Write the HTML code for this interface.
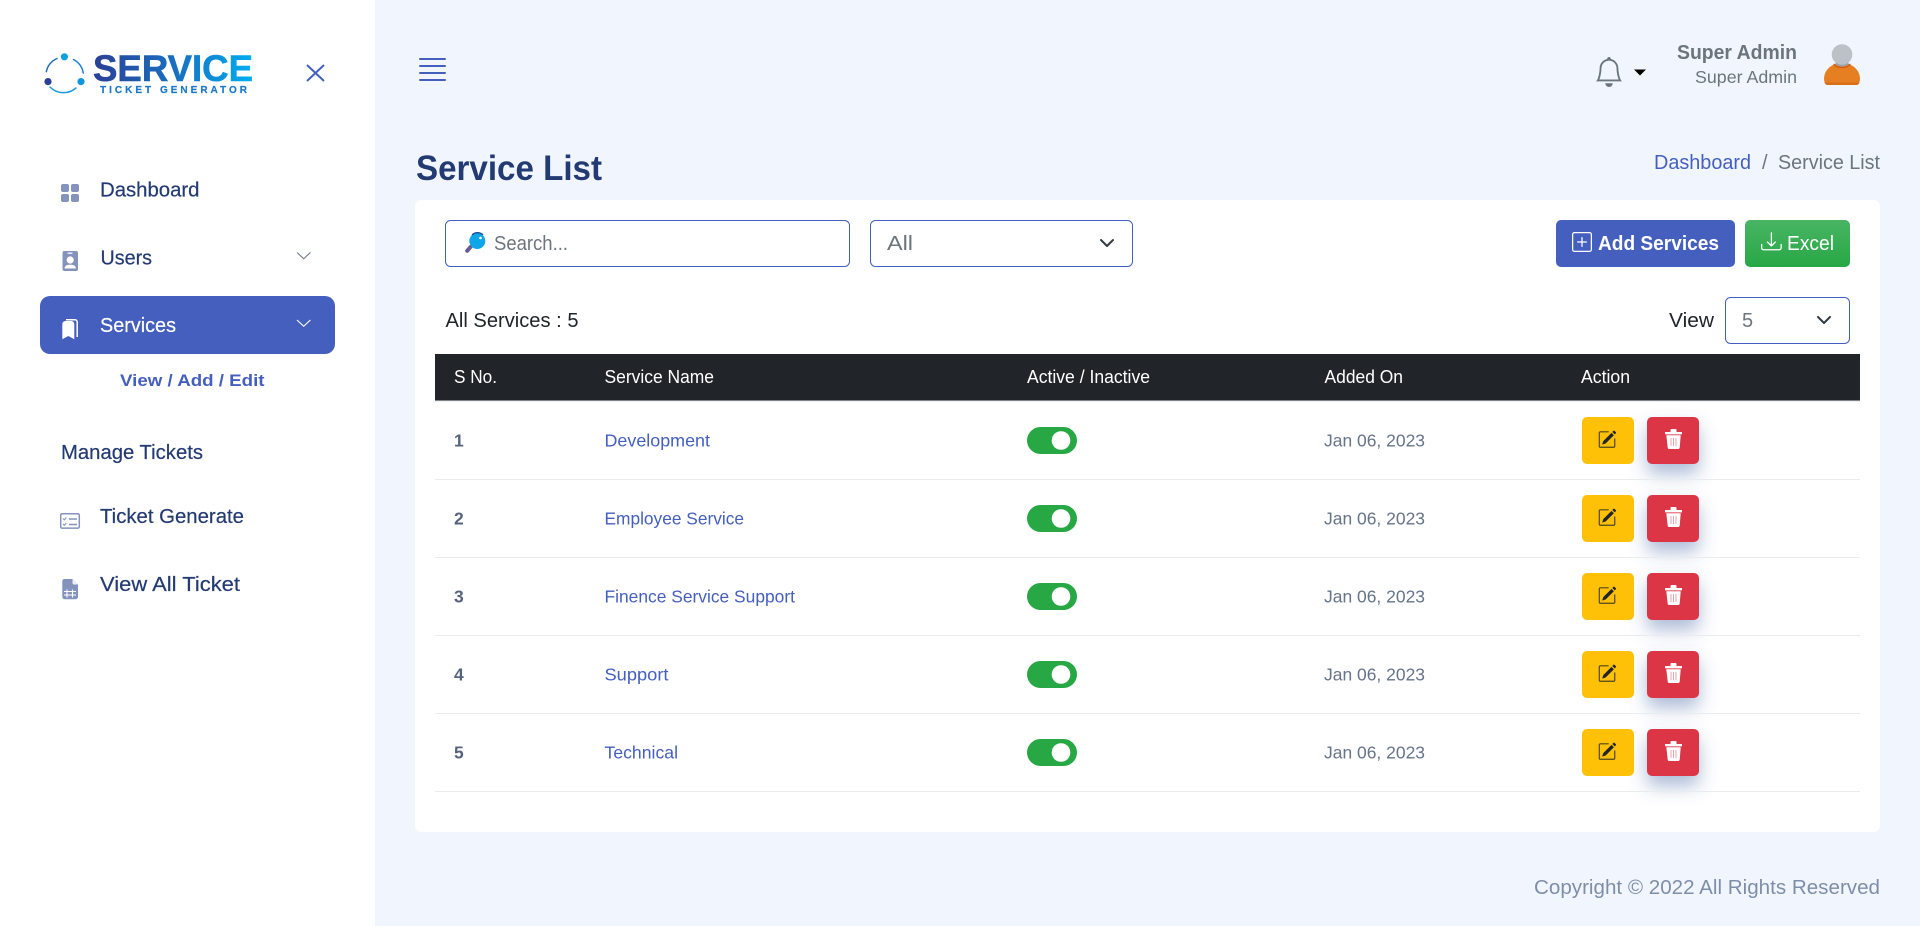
<!DOCTYPE html>
<html lang="en"><head><meta charset="utf-8"><title>Service List</title>
<style>
html,body{margin:0;padding:0;background:#f1f6fe;width:1920px;height:926px;overflow:hidden}
svg{display:block;position:absolute;left:0;top:0}
text{font-family:"Liberation Sans",sans-serif;font-size:20px}
.nav{fill:#233a72;stroke:#233a72;stroke-width:.2}
.g{fill:#6c757d}
.th{fill:#fff;font-size:18px}
.n{fill:#55637f;font-size:17.5px;font-weight:700}
.l{fill:#455fbf;font-size:17.5px}
.d{fill:#66748a;font-size:17.5px}
</style></head><body>
<svg width="1920" height="926" viewBox="0 0 1920 926" xmlns="http://www.w3.org/2000/svg">
<defs>
<linearGradient id="lg" gradientUnits="userSpaceOnUse" x1="93" y1="0" x2="253" y2="0"><stop offset="0" stop-color="#2b3f95"/><stop offset=".55" stop-color="#1673c4"/><stop offset="1" stop-color="#00aeef"/></linearGradient>
<linearGradient id="xl" x1="0" y1="0" x2="0" y2="1"><stop offset="0" stop-color="#48b564"/><stop offset="1" stop-color="#28a745"/></linearGradient>
<filter id="sh" x="-80%" y="-80%" width="260%" height="280%"><feDropShadow dx="0" dy="10" stdDeviation="9" flood-color="#3f5f9f" flood-opacity=".42"/></filter>
<g id="tg"><rect x="1027" y="0" width="50" height="27" rx="13.5" fill="#28a745"/><circle cx="1061" cy="13.5" r="9.3" fill="#fff"/></g>
<g id="act">
<rect x="1647" y="0" width="52" height="47" rx="5" fill="#dc3545" filter="url(#sh)"/>
<rect x="1582" y="0" width="52" height="47" rx="5" fill="#ffc107"/>
<g transform="translate(1597.5,13) scale(1.19)" fill="#212529"><path d="M15.502 1.94a.5.5 0 0 1 0 .706L14.459 3.69l-2-2L13.502.646a.5.5 0 0 1 .707 0l1.293 1.293zm-1.75 2.456-2-2L4.939 9.21a.5.5 0 0 0-.121.196l-.805 2.414a.25.25 0 0 0 .316.316l2.414-.805a.5.5 0 0 0 .196-.12l6.813-6.814z"/><path opacity=".8" d="M1 13.5A1.5 1.5 0 0 0 2.5 15h11a1.5 1.5 0 0 0 1.5-1.5v-6a.5.5 0 0 0-1 0v6a.5.5 0 0 1-.5.5h-11a.5.5 0 0 1-.5-.5v-11a.5.5 0 0 1 .5-.5H9a.5.5 0 0 0 0-1H2.5A1.5 1.5 0 0 0 1 2.5v11z"/></g>
<g fill="#fff"><path d="M1665 15h17v2.4h-17zM1670.5 13a1 1 0 0 1 1-1h4a1 1 0 0 1 1 1v2.500h-6z"/><path d="M1666.300 18.300h14.400l-1 12.300a1.600 1.600 0 0 1-1.600 1.400h-8.800a1.600 1.600 0 0 1-1.600-1.400z"/></g>
<path d="M1671 21v8M1673.500 21v8M1676 21v8" stroke="#dc3545" stroke-width=".7" opacity=".65"/>
</g>
</defs>

<rect width="1920" height="926" fill="#f1f6fe"/>
<rect width="375" height="926" fill="#fff"/>

<!-- logo -->
<g fill="none" stroke-width="1.500" stroke-linecap="round">
<path d="M46.300 71.700A19 19 0 0 1 57 58.500" stroke="#1c6bbd"/>
<path d="M73.500 59.500A19 19 0 0 1 83.300 73" stroke="#1a7fd0"/>
<path d="M50 87A19 19 0 0 0 76 88" stroke="#1b9be0"/>
</g>
<circle cx="64.400" cy="56.800" r="3.600" fill="#0f9fe3"/><circle cx="48" cy="81.600" r="3.600" fill="#2b3f95"/><circle cx="81" cy="81.600" r="3.600" fill="#1295dd"/>
<text x="93" y="81" font-weight="700" style="font-size:37.500px" fill="url(#lg)" stroke="url(#lg)" stroke-width=".6" textLength="160" lengthAdjust="spacingAndGlyphs">SERVICE</text>
<text x="100" y="93" font-weight="700" style="font-size:10px" fill="#1a78cc" stroke="#1a78cc" stroke-width=".2" textLength="147">TICKET GENERATOR</text>
<path d="M307 65l17 16M324 65l-17 16" stroke="#455fbf" stroke-width="2" fill="none"/>

<!-- nav -->
<g fill="#8493bd">
<rect x="61" y="184" width="8" height="8" rx="2"/><rect x="71" y="184" width="8" height="8" rx="2"/><rect x="61" y="194" width="8" height="8" rx="2"/><rect x="71" y="194" width="8" height="8" rx="2"/>
</g>
<text class="nav" x="100" y="196.500" textLength="99.500" lengthAdjust="spacingAndGlyphs">Dashboard</text>

<rect x="62.500" y="251" width="15.500" height="20" rx="2" fill="#8493bd"/>
<rect x="67.500" y="252.500" width="5" height="1.300" rx=".6" fill="#fff"/>
<circle cx="70.200" cy="260" r="3.600" fill="#fff"/><path d="M64.500 268.500c0-3 2.500-3.800 5.700-3.800s5.700.8 5.700 3.800z" fill="#fff"/>
<text class="nav" x="100.500" y="264.500" textLength="51.500" lengthAdjust="spacingAndGlyphs">Users</text>
<path d="M297 252.500l6.700 6.300 6.700-6.300" fill="none" stroke="#737b88" stroke-width="1.100"/>

<rect x="40" y="296" width="295" height="58" rx="10" fill="#455fbf"/>
<path d="M62.300 324a3 3 0 0 1 3-3h6a3 3 0 0 1 3 3v15.300l-6-3.300-6 3.300z" fill="#fff"/>
<path d="M66 319.800h9a2.200 2.200 0 0 1 2.200 2.200v15" fill="none" stroke="#fff" stroke-width="1.500"/>
<text x="100" y="332" fill="#fff" stroke="#fff" stroke-width=".2" textLength="76" lengthAdjust="spacingAndGlyphs">Services</text>
<path d="M297 320l6.700 6.300 6.700-6.300" fill="none" stroke="#fff" stroke-width="1.100"/>

<text x="120" y="386" fill="#455fbf" font-weight="700" style="font-size:16.500px" textLength="144.500" lengthAdjust="spacingAndGlyphs">View / Add / Edit</text>
<text class="nav" x="61" y="459" textLength="142" lengthAdjust="spacingAndGlyphs">Manage Tickets</text>

<rect x="60.700" y="513.700" width="18.600" height="14.400" rx="1.500" fill="none" stroke="#8493bd" stroke-width="1.500"/>
<path d="M69 519h8M69 524.500h8" stroke="#8493bd" stroke-width="1.500"/>
<path d="M63 518.500l1.300 1.300 2-2.300M63 524l1.300 1.300 2-2.300" stroke="#8493bd" stroke-width="1.100" fill="none"/>
<text class="nav" x="100" y="523" textLength="144" lengthAdjust="spacingAndGlyphs">Ticket Generate</text>

<path d="M64.500 579h8l5.500 5.500v12.500a2.200 2.200 0 0 1-2.200 2.200h-11.300a2.200 2.200 0 0 1-2.200-2.200v-15.800a2.200 2.200 0 0 1 2.200-2.200z" fill="#8493bd"/>
<path d="M72.500 579v4a1.500 1.500 0 0 0 1.500 1.500h4z" fill="#fff" opacity=".85"/>
<path d="M64 591.500h12M64 595h12M67 589.500v8M72.500 589.500v8" stroke="#fff" stroke-width="1.100" fill="none"/>
<text class="nav" x="100" y="591" textLength="140" lengthAdjust="spacingAndGlyphs">View All Ticket</text>

<!-- topbar -->
<g fill="#455fbf"><rect x="419" y="58" width="27" height="2" rx="1"/><rect x="419" y="65" width="27" height="2" rx="1"/><rect x="419" y="72" width="27" height="2" rx="1"/><rect x="419" y="79" width="27" height="2" rx="1"/></g>
<g transform="translate(1594,57) scale(1.875)" fill="#6c757d"><path d="M8 16a2 2 0 0 0 2-2H6a2 2 0 0 0 2 2zM8 1.918l-.797.161A4.002 4.002 0 0 0 4 6c0 .628-.134 2.197-.459 3.742-.16.767-.376 1.566-.663 2.258h10.244c-.287-.692-.502-1.490-.663-2.258C12.134 8.197 12 6.628 12 6a4.002 4.002 0 0 0-3.203-3.920L8 1.917zM14.220 12c.223.447.481.801.780 1H1c.299-.199.557-.553.780-1C2.680 10.200 3 6.880 3 6c0-2.420 1.720-4.440 4.005-4.901a1 1 0 1 1 1.990 0A5.002 5.002 0 0 1 13 6c0 .880.320 4.200 1.220 6z"/></g>
<path d="M1634 69.500h12l-6 6z" fill="#000"/>
<text x="1677" y="59" class="g" font-weight="700" textLength="120" lengthAdjust="spacingAndGlyphs">Super Admin</text>
<text x="1695" y="83" class="g" style="font-size:17.500px" textLength="102" lengthAdjust="spacingAndGlyphs">Super Admin</text>
<path d="M1824 79c0-8.500 7-16 18-16s18 7.500 18 16c0 3.500-2 6-4.500 6h-27c-2.500 0-4.500-2.500-4.500-6z" fill="#e67e22"/>
<path d="M1824.400 82.500c.6 1.500 2 2.500 3.100 2.500h29c1.100 0 2.500-1 3.100-2.500z" fill="#d96f15"/>
<path d="M1834.500 63.600c1.500 4.400 13.500 4.400 15 0l1.200.4c-1.700 5.500-15.700 5.500-17.400 0z" fill="#cf5a0a"/>
<path d="M1835.500 62h13v2.300c-2.500 3-10.500 3-13 0z" fill="#98a1aa"/>
<circle cx="1842" cy="54.500" r="10.300" fill="#bcc1c8"/>

<!-- heading -->
<text x="416" y="180" font-weight="700" style="font-size:35px" fill="#233a72" textLength="186" lengthAdjust="spacingAndGlyphs">Service List</text>
<text x="1654" y="169" fill="#455fbf" textLength="97" lengthAdjust="spacingAndGlyphs">Dashboard</text>
<text x="1762" y="169" class="g">/</text>
<text x="1778" y="169" class="g" textLength="102" lengthAdjust="spacingAndGlyphs">Service List</text>

<!-- card -->
<rect x="415" y="200" width="1465" height="632" rx="7" fill="#fff"/>
<rect x="445.500" y="220.500" width="404" height="46" rx="5" fill="#fff" stroke="#455fbf" stroke-width="1"/>
<path d="M470.500 247l-3.300 3.800" stroke="#6b5b95" stroke-width="4" stroke-linecap="round"/>
<circle cx="477.300" cy="241" r="8" fill="#0ea5e9"/><path d="M472 235a8 8 0 0 1 11-.2" fill="none" stroke="#1d4f8f" stroke-width="1.300"/><circle cx="480.500" cy="238" r="1.300" fill="#fff"/>
<text x="494" y="250" class="g" textLength="74" lengthAdjust="spacingAndGlyphs">Search...</text>
<rect x="870.500" y="220.500" width="262" height="46" rx="5" fill="#fff" stroke="#455fbf" stroke-width="1"/>
<text x="887" y="250" class="g" textLength="26" lengthAdjust="spacingAndGlyphs">All</text>
<path d="M1101 240l6 6 6-6" fill="none" stroke="#343a40" stroke-width="2" stroke-linecap="round" stroke-linejoin="round"/>

<rect x="1556" y="220" width="179" height="47" rx="5" fill="#455fbf"/>
<g transform="translate(1572,232) scale(1.250)" fill="#fff"><path d="M14 1a1 1 0 0 1 1 1v12a1 1 0 0 1-1 1H2a1 1 0 0 1-1-1V2a1 1 0 0 1 1-1h12zM2 0a2 2 0 0 0-2 2v12a2 2 0 0 0 2 2h12a2 2 0 0 0 2-2V2a2 2 0 0 0-2-2H2z"/><path d="M8 4a.5.5 0 0 1 .5.5v3h3a.5.5 0 0 1 0 1h-3v3a.5.5 0 0 1-1 0v-3h-3a.5.5 0 0 1 0-1h3v-3A.5.5 0 0 1 8 4z"/></g>
<text x="1598" y="250" fill="#fff" font-weight="700" textLength="121" lengthAdjust="spacingAndGlyphs">Add Services</text>
<rect x="1745" y="220" width="105" height="47" rx="5" fill="url(#xl)"/>
<g transform="translate(1761,231) scale(1.300)" fill="#fff"><path d="M.5 9.900a.5.500 0 0 1 .5.500v2.500a1 1 0 0 0 1 1h12a1 1 0 0 0 1-1v-2.500a.5.500 0 0 1 1 0v2.500a2 2 0 0 1-2 2H2a2 2 0 0 1-2-2v-2.500a.5.500 0 0 1 .5-.5z"/><path d="M7.646 11.854a.5.500 0 0 0 .708 0l3-3a.5.500 0 0 0-.708-.708L8.500 10.293V1.500a.5.500 0 0 0-1 0v8.793L5.354 8.146a.5.500 0 1 0-.708.708l3 3z"/></g>
<text x="1787" y="250" fill="#fff" textLength="47" lengthAdjust="spacingAndGlyphs">Excel</text>

<text x="445.500" y="327" fill="#212529" textLength="133" lengthAdjust="spacingAndGlyphs">All Services : 5</text>
<text x="1669" y="327" fill="#212529" textLength="45" lengthAdjust="spacingAndGlyphs">View</text>
<rect x="1725.500" y="297.500" width="124" height="46" rx="5" fill="#fff" stroke="#455fbf" stroke-width="1"/>
<text x="1742" y="327" class="g">5</text>
<path d="M1818 317l6 6 6-6" fill="none" stroke="#343a40" stroke-width="2" stroke-linecap="round" stroke-linejoin="round"/>

<!-- table -->
<rect x="435" y="354" width="1425" height="47" fill="#212529"/>
<rect x="435" y="400.500" width="1425" height="1" fill="#dee2e6"/>
<text class="th" x="454" y="383" textLength="43" lengthAdjust="spacingAndGlyphs">S No.</text>
<text class="th" x="604.500" y="383" textLength="109.500" lengthAdjust="spacingAndGlyphs">Service Name</text>
<text class="th" x="1027" y="383" textLength="123" lengthAdjust="spacingAndGlyphs">Active / Inactive</text>
<text class="th" x="1324.500" y="383" textLength="78.500" lengthAdjust="spacingAndGlyphs">Added On</text>
<text class="th" x="1581" y="383" textLength="49" lengthAdjust="spacingAndGlyphs">Action</text>

<text class="n" x="454" y="446.500">1</text>
<text class="l" x="604.500" y="446.500" textLength="105.500" lengthAdjust="spacingAndGlyphs">Development</text>
<use href="#tg" y="427"/><text class="d" x="1324" y="446.500" textLength="101" lengthAdjust="spacingAndGlyphs">Jan 06, 2023</text>
<use href="#act" y="417"/>
<rect x="435" y="479" width="1425" height="1" fill="#e9ecef"/>

<text class="n" x="454" y="524.500">2</text>
<text class="l" x="604.500" y="524.500" textLength="139.500" lengthAdjust="spacingAndGlyphs">Employee Service</text>
<use href="#tg" y="505"/><text class="d" x="1324" y="524.500" textLength="101" lengthAdjust="spacingAndGlyphs">Jan 06, 2023</text>
<use href="#act" y="495"/>
<rect x="435" y="557" width="1425" height="1" fill="#e9ecef"/>

<text class="n" x="454" y="602.500">3</text>
<text class="l" x="604.500" y="602.500" textLength="190.500" lengthAdjust="spacingAndGlyphs">Finence Service Support</text>
<use href="#tg" y="583"/><text class="d" x="1324" y="602.500" textLength="101" lengthAdjust="spacingAndGlyphs">Jan 06, 2023</text>
<use href="#act" y="573"/>
<rect x="435" y="635" width="1425" height="1" fill="#e9ecef"/>

<text class="n" x="454" y="680.500">4</text>
<text class="l" x="604.500" y="680.500" textLength="64" lengthAdjust="spacingAndGlyphs">Support</text>
<use href="#tg" y="661"/><text class="d" x="1324" y="680.500" textLength="101" lengthAdjust="spacingAndGlyphs">Jan 06, 2023</text>
<use href="#act" y="651"/>
<rect x="435" y="713" width="1425" height="1" fill="#e9ecef"/>

<text class="n" x="454" y="758.500">5</text>
<text class="l" x="604.500" y="758.500" textLength="73.500" lengthAdjust="spacingAndGlyphs">Technical</text>
<use href="#tg" y="739"/><text class="d" x="1324" y="758.500" textLength="101" lengthAdjust="spacingAndGlyphs">Jan 06, 2023</text>
<use href="#act" y="729"/>
<rect x="435" y="791" width="1425" height="1" fill="#e9ecef"/>

<text x="1534" y="894" fill="#7f8ea8" textLength="346" lengthAdjust="spacingAndGlyphs">Copyright © 2022 All Rights Reserved</text>
</svg>
</body></html>
